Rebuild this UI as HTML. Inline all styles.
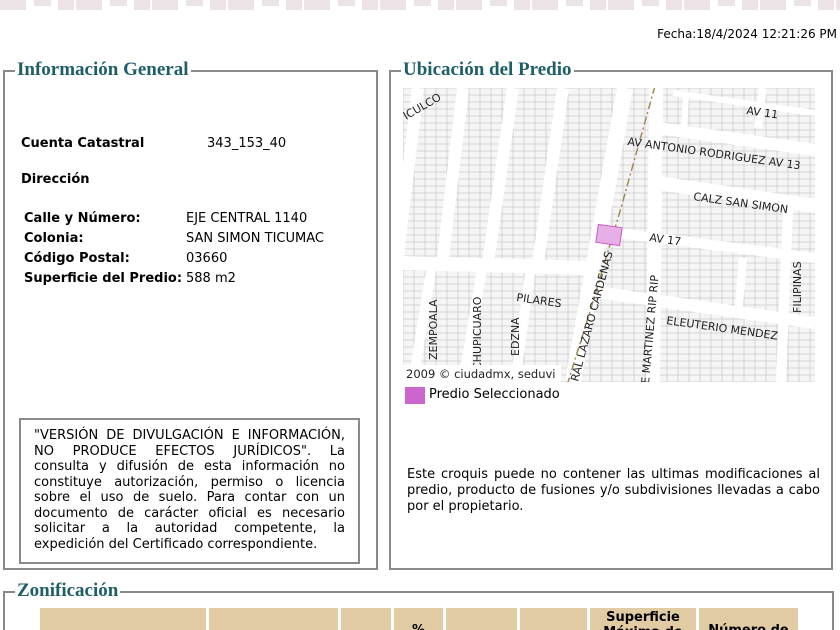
<!DOCTYPE html>
<html><head><meta charset="utf-8"><style>
html,body{margin:0;width:840px;height:630px;overflow:hidden}
body{background:#fff;font-family:"DejaVu Sans","Liberation Sans",sans-serif;font-size:13px;color:#000;position:relative}
.abs{position:absolute}
.fs{position:absolute;border:2px solid #8a8a8a;box-sizing:border-box}
.lg{position:absolute;top:-14px;left:10px;background:#fff;padding:0 2px;font-family:"Liberation Serif",serif;font-weight:bold;font-size:19px;color:#1d5e68;line-height:24px}
b{font-weight:bold}
.th{position:absolute;top:608px;height:22px;overflow:hidden;background:#e0cba3;font-weight:bold;font-size:13px;text-align:center}
</style></head><body>
<svg class="abs" style="left:0;top:0" width="840" height="12">
<defs><pattern id="p" x="-2" y="0" width="76" height="12" patternUnits="userSpaceOnUse">
<rect x="2" y="0" width="26" height="10" fill="#ebe3e6"/>
<rect x="36" y="0" width="17" height="6" fill="#ebe3e6"/>
<rect x="60" y="0" width="44" height="10" fill="#ebe3e6"/>
</pattern></defs>
<rect width="840" height="12" fill="url(#p)"/></svg>
<div class="abs" style="right:3px;top:27px;font-size:12px">Fecha:18/4/2024 12:21:26 PM</div>

<div class="fs" style="left:3px;top:70px;width:375px;height:500px">
<div class="lg">Información General</div>
</div>
<div class="abs" style="left:21px;top:136px"><b>Cuenta Catastral</b></div>
<div class="abs" style="left:207px;top:136px">343_153_40</div>
<div class="abs" style="left:21px;top:172px"><b>Dirección</b></div>
<div class="abs" style="left:24px;top:209px;line-height:20px"><b>Calle y Número:</b><br><b>Colonia:</b><br><b>Código Postal:</b><br><b>Superficie del Predio:</b></div>
<div class="abs" style="left:186px;top:209px;line-height:20px">EJE CENTRAL 1140<br>SAN SIMON TICUMAC<br>03660<br>588 m2</div>
<div class="abs" style="left:19px;top:418px;width:341px;height:146px;border:2px solid #8a8a8a;box-sizing:border-box;padding:8px 13px;text-align:justify;line-height:15.5px">"VERSIÓN DE DIVULGACIÓN E INFORMACIÓN, NO PRODUCE EFECTOS JURÍDICOS". La consulta y difusión de esta información no constituye autorización, permiso o licencia sobre el uso de suelo. Para contar con un documento de carácter oficial es necesario solicitar a la autoridad competente, la expedición del Certificado correspondiente.</div>

<div class="fs" style="left:389px;top:70px;width:444px;height:500px">
<div class="lg">Ubicación del Predio</div>
</div>
<svg class="abs" style="left:403px;top:88px" width="412" height="294" font-family="DejaVu Sans,sans-serif" font-size="11" fill="#222">
<defs><pattern id="b" width="11" height="7" patternUnits="userSpaceOnUse"><rect width="11" height="7" fill="#f5f5f5" stroke="#c0c0c0" stroke-width="0.6"/></pattern></defs>
<rect width="412" height="294" fill="url(#b)"/>
<g stroke="#fff" fill="none" stroke-linecap="butt">
<path d="M15 0 L-20 294" stroke-width="12"/>
<path d="M60 0 L40 170" stroke-width="12"/>
<path d="M110 0 L85 175" stroke-width="12"/>
<path d="M160 0 L135 175" stroke-width="12"/>
<path d="M30 170 L10 294" stroke-width="10"/>
<path d="M80 175 L60 294" stroke-width="10"/>
<path d="M128 178 L112 294" stroke-width="10"/>
<path d="M222 0 L170 294" stroke-width="16"/>
<path d="M0 175 L190 180" stroke-width="14"/>
<path d="M185 180 L200 205 L412 235" stroke-width="12"/>
<path d="M255 40 L412 62" stroke-width="12"/>
<path d="M270 5 L412 25" stroke-width="6"/>
<path d="M360 0 L355 40" stroke-width="8"/>
<path d="M255 95 L412 118" stroke-width="14"/>
<path d="M215 145 L412 170" stroke-width="10"/>
<path d="M253 0 L250 294" stroke-width="14"/>
<path d="M283 10 L281 40" stroke-width="6"/>
<path d="M385 120 L378 294" stroke-width="10"/>
<path d="M340 170 L335 230" stroke-width="8"/>
</g>
<path d="M252 -2 L218 120 L185 230 L165 294" stroke="#a08a50" stroke-width="1.5" stroke-dasharray="8 3 2 3" fill="none"/>
<rect x="194" y="138" width="24" height="18" fill="#e6b0e6" stroke="#cc55cc" transform="rotate(8 206 147)"/>
<g font-size="11" fill="#222">
<text x="3" y="32" transform="rotate(-30 3 32)">ICULCO</text>
<text x="343" y="26" transform="rotate(8 343 26)">AV 11</text>
<text x="224" y="57" transform="rotate(8 224 57)">AV ANTONIO RODRIGUEZ AV 13</text>
<text x="290" y="112" transform="rotate(8 290 112)">CALZ SAN SIMON</text>
<text x="246" y="153" transform="rotate(8 246 153)">AV 17</text>
<text x="113" y="213" transform="rotate(8 113 213)">PILARES</text>
<text x="263" y="236" transform="rotate(8 263 236)">ELEUTERIO MENDEZ</text>
<text x="34" y="272" transform="rotate(-90 34 272)">ZEMPOALA</text>
<text x="78" y="282" transform="rotate(-90 78 282)">CHUPICUARO</text>
<text x="116" y="268" transform="rotate(-90 116 268)">EDZNA</text>
<text x="175" y="294" transform="rotate(-75 175 294)">RAL LAZARO CARDENAS</text>
<text x="246" y="296" transform="rotate(-85 246 296)">E MARTINEZ RIP RIP</text>
<text x="398" y="225" transform="rotate(-90 398 225)">FILIPINAS</text>
</g>
<rect x="0" y="277" width="158" height="17" fill="#fff"/>
<text x="3" y="290" font-size="11.5">2009 © ciudadmx, seduvi</text>
</svg>
<div class="abs" style="left:405px;top:387px;width:20px;height:17px;background:#cc66cc"></div>
<div class="abs" style="left:429px;top:387px">Predio Seleccionado</div>
<div class="abs" style="left:407px;top:467px;width:413px;line-height:16px;text-align:justify">Este croquis puede no contener las ultimas modificaciones al predio, producto de fusiones y/o subdivisiones llevadas a cabo por el propietario.</div>

<div class="fs" style="left:3px;top:591px;width:831px;height:39px;border-bottom:none">
<div class="lg">Zonificación</div>
</div>
<div class="th" style="left:40px;width:166px"></div>
<div class="th" style="left:209px;width:129px"></div>
<div class="th" style="left:341px;width:50px"></div>
<div class="th" style="left:394px;width:49px;padding-top:15px;box-sizing:border-box">%</div>
<div class="th" style="left:446px;width:71px"></div>
<div class="th" style="left:520px;width:67px"></div>
<div class="th" style="left:590px;width:106px;line-height:15px;padding-top:2px;box-sizing:border-box">Superficie<br>Máxima de</div>
<div class="th" style="left:699px;width:99px;padding-top:15px;box-sizing:border-box">Número de</div>
</body></html>
